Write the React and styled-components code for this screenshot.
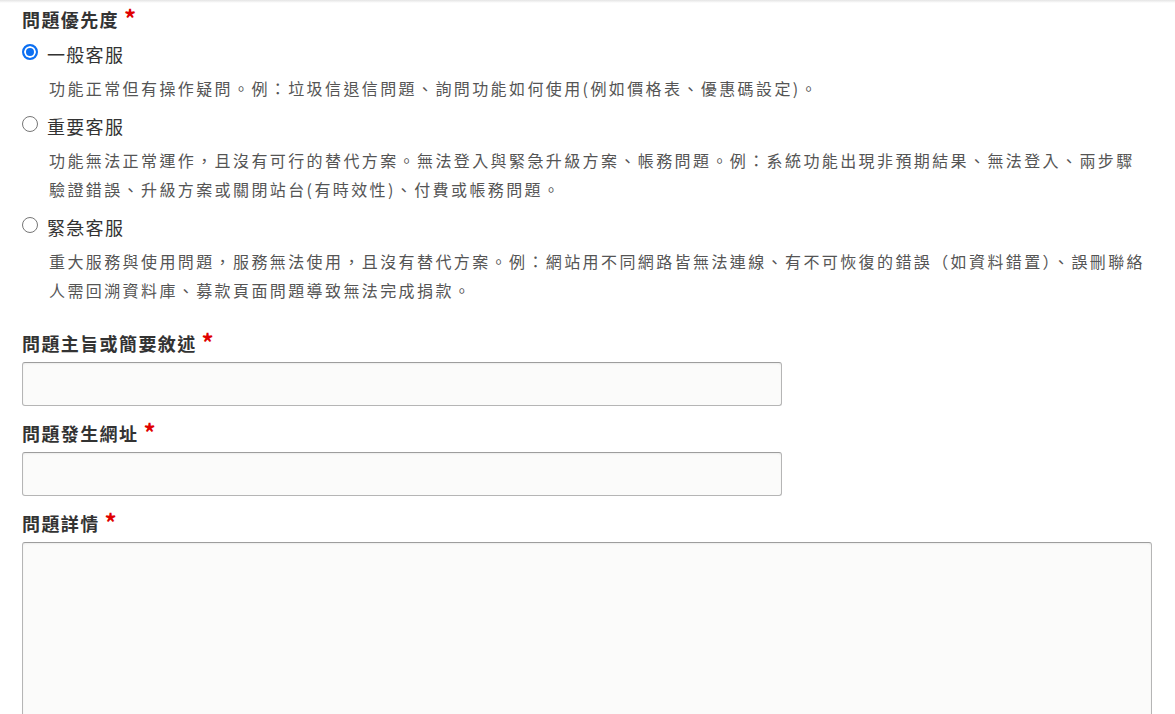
import React from 'react';
import styled, { createGlobalStyle } from 'styled-components';

const GlobalStyle = createGlobalStyle`
    html, body {
        margin: 0;
        padding: 0;
        background: #fff;
    }

    body {
        font-family: "Noto Sans CJK TC", "Noto Sans", sans-serif;
        color: #333;
    }
`;

const TopShade = styled.div`
    height: 3px;
    background: linear-gradient(#e4e4e4, #fff);
`;

const Form = styled.form`
    display: flex;
    flex-direction: column;
    padding: 3px 23px 0 22px;
`;

const Label = styled.div`
    font-size: 18px;
    font-weight: 700;
    line-height: 27px;
    letter-spacing: 1.4px;
    color: #333;
    margin-bottom: ${props => props.tight ? 5 : 0}px;
`;

const Required = styled.span`
    color: #e00000;
    font-size: 24px;
    line-height: 0;
    margin-left: 5px;
    letter-spacing: 0;
    position: relative;
    top: 1px;
`;

const Options = styled.div`
    display: flex;
    flex-direction: column;
    margin-top: 8px;
    margin-bottom: 15px;
`;

const Option = styled.div`
    display: flex;
    flex-direction: column;
    margin-bottom: 10px;
`;

const OptionRow = styled.label`
    display: flex;
    align-items: flex-start;
    line-height: 27px;
    font-size: 18px;
    letter-spacing: 1.3px;
    color: #333;
`;

const Radio = styled.input`
    appearance: none;
    box-sizing: border-box;
    width: 16px;
    height: 16px;
    margin: 3px 9px 0 0;
    flex-shrink: 0;
    border: 1px solid #767676;
    border-radius: 50%;
    background: #fff;

    &:checked {
        border: 2px solid #0b6ff2;
        background: #0b6ff2;
        box-shadow: inset 0 0 0 2px #fff;
    }
`;

const Description = styled.p`
    margin: 6px 0 0 0;
    padding-left: 27px;
    font-size: 16px;
    line-height: 29px;
    letter-spacing: 2.4px;
    color: #555;
`;

const Field = styled.div`
    display: flex;
    flex-direction: column;
    margin-bottom: 14px;
`;

const TextInput = styled.input`
    box-sizing: border-box;
    width: 760px;
    height: 44px;
    border: 1px solid #b5b5b5;
    border-top-color: #9d9d9d;
    border-radius: 3px;
    background: #fbfbfa;
    box-shadow: inset 0 1px 2px rgba(0, 0, 0, 0.06);
    font: inherit;
    font-size: 16px;
    padding: 0 10px;
`;

const TextArea = styled.textarea`
    box-sizing: border-box;
    width: 100%;
    height: 220px;
    border: 1px solid #b5b5b5;
    border-top-color: #9d9d9d;
    border-radius: 3px;
    background: #fbfbfa;
    box-shadow: inset 0 1px 2px rgba(0, 0, 0, 0.06);
    font: inherit;
    font-size: 16px;
    padding: 10px;
    resize: vertical;
`;

const priorities = [
    {
        value: 'normal',
        title: '一般客服',
        text: '功能正常但有操作疑問。例：垃圾信退信問題、詢問功能如何使用(例如價格表、優惠碼設定)。'
    },
    {
        value: 'important',
        title: '重要客服',
        text: '功能無法正常運作，且沒有可行的替代方案。無法登入與緊急升級方案、帳務問題。例：系統功能出現非預期結果、無法登入、兩步驟驗證錯誤、升級方案或關閉站台(有時效性)、付費或帳務問題。'
    },
    {
        value: 'urgent',
        title: '緊急客服',
        text: '重大服務與使用問題，服務無法使用，且沒有替代方案。例：網站用不同網路皆無法連線、有不可恢復的錯誤（如資料錯置）、誤刪聯絡人需回溯資料庫、募款頁面問題導致無法完成捐款。'
    }
];

const App = () => {
    return (
        <>
            <GlobalStyle />
            <TopShade />
            <Form onSubmit={e => e.preventDefault()}>
                <Label>問題優先度<Required>*</Required></Label>

                <Options>
                    {priorities.map(p => (
                        <Option key={p.value}>
                            <OptionRow>
                                <Radio
                                    type="radio"
                                    name="priority"
                                    value={p.value}
                                    defaultChecked={p.value === 'normal'} />
                                {p.title}
                            </OptionRow>
                            <Description>{p.text}</Description>
                        </Option>
                    ))}
                </Options>

                <Field>
                    <Label tight>問題主旨或簡要敘述<Required>*</Required></Label>
                    <TextInput type="text" />
                </Field>

                <Field>
                    <Label tight>問題發生網址<Required>*</Required></Label>
                    <TextInput type="text" />
                </Field>

                <Field>
                    <Label tight>問題詳情<Required>*</Required></Label>
                    <TextArea />
                </Field>
            </Form>
        </>
    );
};

export default App;
